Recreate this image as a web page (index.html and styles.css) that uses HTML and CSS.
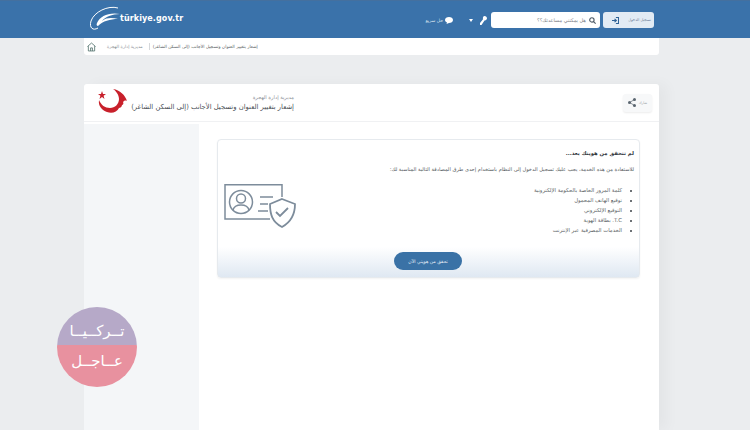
FILE: index.html
```html
<!DOCTYPE html>
<html lang="ar">
<head>
    <meta charset="UTF-8">
    <meta name="viewport" content="width=device-width, initial-scale=1.0">
    <title>türkiye.gov.tr</title>
    <link rel="stylesheet" href="styles.css">
</head>
<body>
    <header class="topbar">
        <div class="wrap topbar-inner">
            <a class="logo" href="#">
                <svg class="logo-mark" width="34" height="26" viewBox="0 0 34 26" fill="none">
                    <path d="M30 2C20 -1 6 6 3 15C1 22 5 25 10 22" stroke="#fff" stroke-width="1"/>
                    <path d="M9 17C12 10 21 6 32 8C24 8 17 11 14 15C19 11 25 12 30 13C22 13 15 15 10 20C9 20 8 19 9 17Z" fill="#fff"/>
                </svg>
                <span class="logo-text">türkiye.gov.tr</span>
            </a>
            <div class="tools">
                <a class="quick" href="#">
                    <span>حل سريع</span>
                    <svg width="8" height="7" viewBox="0 0 8 7"><path d="M4 0C6.2 0 8 1.3 8 3S6.2 6 4 6L1.5 7L2 5.400C.8 4.900 0 4 0 3C0 1.300 1.800 0 4 0Z" fill="#fff"/></svg>
                </a>
                <span class="caret"></span>
                <svg class="key" width="7" height="9" viewBox="0 0 7 9"><path d="M4.500 0C6 0 7 1 7 2.300C7 3.600 5.800 4.600 4.500 4.400L1.500 9H0V7L3 3.300C2.600 1.500 3.300 0 4.500 0Z" fill="#fff"/></svg>
                <label class="search">
                    <svg width="7" height="7" viewBox="0 0 8 8" fill="none" stroke="#4d5a66" stroke-width="1.300"><circle cx="3.300" cy="3.300" r="2.500"/><path d="M5.200 5.200L7.600 7.600"/></svg>
                    <span>هل يمكنني مساعدتك؟؟</span>
                </label>
                <a class="login" href="#">
                    <svg width="7" height="7" viewBox="0 0 9 9" fill="none" stroke="#2f6296" stroke-width="1.400"><path d="M5 .6H8.400V8.400H5"/><path d="M0 4.500H5M3.300 2.300L5.600 4.500L3.300 6.700"/></svg>
                    <span>تسجيل الدخول</span>
                </a>
            </div>
        </div>
    </header>

    <nav class="wrap crumbs">
        <svg class="home" width="9" height="10" viewBox="0 0 10 10" fill="none" stroke="#4f6f6a" stroke-width=".9"><path d="M.5 4.500L5 .6L9.500 4.500M1.500 4V9.400H8.500V4M4 9.400V6H6V9.400"/></svg>
        <span class="crumb-dim">مديرية إدارة الهجرة</span>
        <span class="crumb-sep"></span>
        <span class="crumb">إشعار بتغيير العنوان وتسجيل الأجانب (إلى السكن الشاغر)</span>
    </nav>

    <main class="wrap card">
        <div class="card-head">
            <svg class="emblem" width="30" height="28" viewBox="0 0 30 28">
                <path d="M4 3L5 6H8L5.600 7.800L6.500 11L4 9L1.500 11L2.400 7.800L0 6H3Z" fill="#c8202b"/>
                <path d="M15 1C22 2 27 7 29 13C27 12 26 13 25 14C26 15 25 17 24 17C24 19 22 20 21 20C19 24 14 26 9 24C4 22 0 18 1 12C3 17 7 20 12 20C17 20 21 16 21 11C21 7 18 3 15 1Z" fill="#c8202b"/>
            </svg>
            <div class="head-text">
                <div class="head-sub">مديرية إدارة الهجرة</div>
                <h1>إشعار بتغيير العنوان وتسجيل الأجانب (إلى السكن الشاغر)</h1>
            </div>
            <button class="share">
                <svg width="8" height="9" viewBox="0 0 9 10" fill="#5b6670"><circle cx="7.300" cy="1.700" r="1.700"/><circle cx="1.700" cy="5" r="1.700"/><circle cx="7.300" cy="8.300" r="1.700"/><path d="M1.700 5L7.300 1.700M1.700 5L7.300 8.300" stroke="#5b6670" stroke-width=".8"/></svg>
                <span>شارك</span>
            </button>
        </div>
        <div class="card-body">
            <aside class="side"></aside>
            <section class="content">
                <div class="panel">
                    <div class="panel-main">
                        <svg class="id-art" width="72" height="46" viewBox="0 0 72 46" fill="none" stroke="#7d8c9b" stroke-width="1.500">
                            <path d="M58 13V.8H1V35H46"/>
                            <circle cx="17" cy="18" r="11.500"/>
                            <circle cx="17" cy="14.500" r="4.500"/>
                            <path d="M9 26C10 22 13 21 17 21C21 21 24 22 25 26"/>
                            <path d="M36 13H49M36 20H44M34 27H44"/>
                            <path d="M58 15L71 20C71 31 67 38 58 43C48 38 46 30 46 20Z" fill="#fff" stroke-width="1.800"/>
                            <path d="M52 28L56 32L64 24" stroke-width="1.800"/>
                        </svg>
                        <div class="panel-text">
                            <p class="panel-title">لم تتحقق من هويتك بعد...</p>
                            <p class="panel-lead">للاستفادة من هذه الخدمة، يجب عليك تسجيل الدخول إلى النظام باستخدام إحدى طرق المصادقة التالية المناسبة لك:</p>
                            <ul class="methods">
                                <li>كلمة المرور الخاصة بالحكومة الإلكترونية</li>
                                <li>توقيع الهاتف المحمول</li>
                                <li>التوقيع الإلكتروني</li>
                                <li>T.C. بطاقة الهوية</li>
                                <li>الخدمات المصرفية عبر الإنترنت</li>
                            </ul>
                        </div>
                    </div>
                    <div class="panel-foot">
                        <a class="verify" href="#">تحقق من هويتي الآن</a>
                    </div>
                </div>
            </section>
        </div>
    </main>

    <div class="badge">
        <div class="badge-top">تــركــيــا</div>
        <div class="badge-bottom">عــاجــل</div>
    </div>
</body>
</html>
```
FILE: styles.css
```css
html, body {
    height: 100%;
    overflow: hidden;
}

body {
    background: #ebedef;
    margin: 0;
    padding: 0;
    font-family: "DejaVu Sans", "Noto Sans", sans-serif;
    color: #4a4f55;
}

a {
    text-decoration: none;
    color: inherit;
}

.wrap {
    width: 575px;
    margin-left: 84px;
}

/* Top bar */
.topbar {
    background: #3a72aa;
    height: 38px;
    border-top: 1px solid #44709f;
    box-sizing: border-box;
}

.topbar-inner {
    display: flex;
    justify-content: space-between;
    align-items: center;
    height: 37px;
    width: 570px;
}

.logo {
    display: flex;
    align-items: center;
    margin-left: 4px;
    margin-top: -1px;
}

.logo-text {
    color: #fff;
    font-size: 8px;
    font-weight: bold;
    letter-spacing: .1px;
    margin-left: -2px;
    margin-top: -1px;
}

.tools {
    display: flex;
    align-items: center;
    margin-top: 1px;
}

.quick {
    display: flex;
    align-items: center;
    gap: 2px;
    color: #dbe6f0;
    font-size: 4.500px;
    margin-right: 16px;
}

.caret {
    border: 2.500px solid transparent;
    border-top: 3px solid #fff;
    border-bottom: 0;
    margin-right: 7px;
}

.key {
    margin-right: 4px;
}

.search {
    width: 109px;
    height: 16px;
    background: #fff;
    border-radius: 3px;
    display: flex;
    align-items: center;
    direction: rtl;
    gap: 3px;
    box-sizing: border-box;
    padding: 0 4px;
    font-size: 5px;
    color: #7b8086;
    margin-right: 3px;
}

.login {
    width: 51px;
    height: 16px;
    background: #e2ebf4;
    border-radius: 3px;
    display: flex;
    align-items: center;
    box-sizing: border-box;
    padding: 0 3px 0 9px;
    justify-content: space-between;
    color: #5c7490;
    font-size: 3.700px;
}

/* Breadcrumb */
.crumbs {
    background: #fff;
    height: 17px;
    border-radius: 0 0 3px 3px;
    display: flex;
    align-items: center;
    box-sizing: border-box;
    padding-left: 3px;
    font-size: 4.400px;
}

.home {
    margin-right: 11px;
}

.crumb-dim {
    color: #8c9096;
}

.crumb-sep {
    width: 1px;
    height: 7px;
    background: #d5d8db;
    margin: 0 3px 0 6px;
}

.crumb {
    color: #5a5f65;
}

/* Main card */
.card {
    background: #fff;
    margin-top: 29px;
    border-radius: 3px 3px 0 0;
    box-shadow: 8px 0 14px rgba(0, 0, 0, .035);
    height: 346px;
    display: flex;
    flex-direction: column;
}

.card-head {
    height: 38px;
    flex-shrink: 0;
    display: flex;
    align-items: center;
    box-sizing: border-box;
    padding: 0 7px 0 14px;
    border-bottom: 1px solid #f0f1f3;
}

.emblem {
    margin-top: -1px;
}

.head-text {
    margin-left: 4px;
    direction: rtl;
    text-align: right;
    width: 162px;
    flex: none;
}

.head-sub {
    font-size: 5.100px;
    color: #8b9096;
    margin-bottom: 3px;
}

.head-text h1 {
    margin: 0;
    font-size: 6.800px;
    font-weight: normal;
    color: #4a4f55;
    white-space: nowrap;
}

.share {
    margin-left: auto;
    width: 29px;
    height: 18px;
    background: #f7f8f9;
    border: none;
    border-radius: 3px;
    box-shadow: 0 1px 2px rgba(0, 0, 0, .08);
    display: flex;
    align-items: center;
    justify-content: center;
    gap: 3px;
    padding: 0;
    font-family: inherit;
    font-size: 3.500px;
    color: #9aa0a6;
}

.card-body {
    flex: 1;
    display: flex;
}

.side {
    width: 115px;
    background: #f4f6f8;
    margin-top: 2px;
}

.content {
    flex: 1;
    padding: 17px 19px 0 18px;
    box-sizing: border-box;
}

/* Verify panel */
.panel {
    height: 139px;
    border: 1px solid #e6eaee;
    border-radius: 4px;
    box-sizing: border-box;
    display: flex;
    flex-direction: column;
    background: linear-gradient(#fff 78%, #dfe8f2);
    box-shadow: 0 1px 2px rgba(0, 0, 0, .05);
}

.panel-main {
    flex: 1;
    position: relative;
    direction: rtl;
    padding: 10px 5px 0 0;
}

.id-art {
    position: absolute;
    left: 6px;
    top: 44px;
}

.panel-title {
    margin: 0 0 10px;
    font-size: 5.300px;
    font-weight: bold;
    color: #33383d;
}

.panel-lead {
    margin: 0 0 13px;
    font-size: 5.100px;
    color: #555a60;
    white-space: nowrap;
}

.methods {
    margin: 0;
    padding: 0 12px 0 0;
    font-size: 5.300px;
    line-height: 10px;
    color: #5a5f65;
}

.methods li::marker {
    color: #3e4348;
}

.panel-foot {
    height: 25px;
    display: flex;
    justify-content: center;
    box-sizing: border-box;
    padding-right: 1px;
}

.verify {
    width: 68px;
    height: 18px;
    border-radius: 9px;
    background: #3a72a6;
    color: #e8eff6;
    font-size: 4.600px;
    display: flex;
    align-items: center;
    justify-content: center;
    direction: rtl;
}

/* Watermark */
.badge {
    position: absolute;
    left: 57px;
    top: 307px;
    width: 80px;
    height: 80px;
    border-radius: 50%;
    overflow: hidden;
    color: #fff;
    font-size: 15px;
    text-align: center;
    direction: rtl;
    white-space: nowrap;
}

.badge-top {
    height: 38px;
    line-height: 48px;
    background: #b6a9c8;
}

.badge-bottom {
    height: 42px;
    line-height: 32px;
    background: #e8919f;
}
```
